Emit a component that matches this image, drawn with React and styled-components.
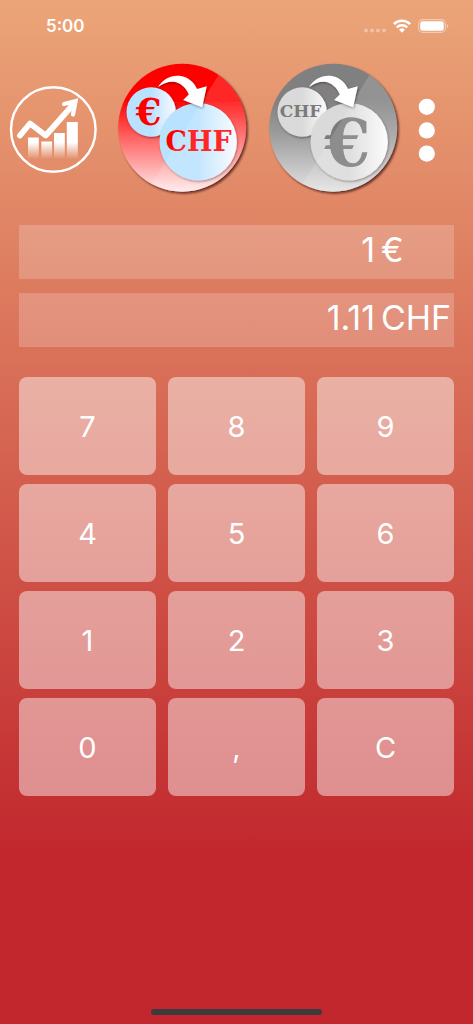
import React, {useState} from 'react'
import styled, {createGlobalStyle} from 'styled-components'

const RATE = 1.11
const KEYS = ['7', '8', '9', '4', '5', '6', '1', '2', '3', '0', ',', 'C']

const GlobalStyle = createGlobalStyle`
    body {
        margin: 0;
        background: #c1272d;
    }

    * {
        box-sizing: border-box;
    }
`

const Page = styled.div`
    display: flex;
    flex-direction: column;
    min-height: 100vh;
    font-family: Inter, "Liberation Sans", sans-serif;
    color: #ffffff;
    background: linear-gradient(#eba578 0%, #c1272d 84%);
`

const StatusBar = styled.div`
    display: flex;
    align-items: center;
    justify-content: space-between;
    height: 52px;
    padding: 0 24px 0 46px;
`

const Clock = styled.time`
    font-size: 17px;
    font-weight: 600;
    line-height: 24px;
`

const StatusIcons = styled.div`
    display: flex;
    align-items: center;
    gap: 7px;
`

const Toolbar = styled.nav`
    display: flex;
    align-items: center;
    justify-content: space-between;
    padding: 12px 37px 31px 9px;
`

const IconButton = styled.button`
    flex: none;
    padding: 0;
    border: none;
    border-radius: ${p => (p.$round ? '50%' : '0')};
    background: none;
    cursor: pointer;

    & svg {
        display: block;
        overflow: visible;
    }
`

const Displays = styled.section`
    display: grid;
    gap: 14px;
    padding: 0 19px;
`

const Display = styled.output`
    display: grid;
    grid-template-columns: 1fr 73px;
    column-gap: 6px;
    height: 54px;
    font-size: 34px;
    font-weight: 400;
    line-height: 49px;
    background: rgba(255, 255, 255, 0.2);
`

const Amount = styled.span`
    overflow: hidden;
    text-align: right;
`

const Keypad = styled.div`
    display: grid;
    grid-template-columns: repeat(3, 1fr);
    grid-auto-rows: 98px;
    gap: 9px 12px;
    padding: 30px 19px;
`

const Key = styled.button`
    padding: 0;
    border: none;
    border-radius: 8px;
    font-family: inherit;
    font-size: 29px;
    font-weight: 400;
    color: #ffffff;
    background: rgba(255, 255, 255, 0.46);
    cursor: pointer;

    &:active {
        background: rgba(255, 255, 255, 0.6);
    }
`

const HomeBar = styled.div`
    width: 36%;
    height: 6px;
    margin: auto auto 9px;
    border-radius: 3px;
    background: #3d3a3c;
`

const SignalIcon = () => (
    <svg width="22" height="14" viewBox="0 0 22 14" fill="#fff" fillOpacity="0.35">
        {[2, 8, 14, 20].map(x => <circle key={x} cx={x} cy="11.5" r="2" />)}
    </svg>
)

const WifiIcon = () => (
    <svg width="18" height="14" viewBox="0 0 18 14" fill="none" stroke="#fff" strokeWidth="2.5">
        <path d="M.9 5.2a11.5 11.5 0 0 1 16.2 0" />
        <path d="M3.8 8.4a7.4 7.4 0 0 1 10.4 0" />
        <path d="M9 13.7l-2.9-2.9a4.1 4.1 0 0 1 5.8 0z" fill="#fff" stroke="none" />
    </svg>
)

const BatteryIcon = () => (
    <svg width="31" height="14" viewBox="0 0 31 14">
        <rect x="0.6" y="0.6" width="26.8" height="12.8" rx="4" fill="none" stroke="#fff" strokeOpacity="0.45" strokeWidth="1.1" />
        <rect x="2.2" y="2.2" width="23.6" height="9.6" rx="2.5" fill="#fff" />
        <path d="M28.8 4.9c1.8.6 1.8 3.6 0 4.2z" fill="#fff" fillOpacity="0.5" />
    </svg>
)

const ChartIcon = () => (
    <svg width="88" height="88" viewBox="0 0 88 88">
        <defs>
            <linearGradient id="bars" gradientUnits="userSpaceOnUse" x1="0" y1="52" x2="0" y2="74">
                <stop offset="0.25" stopColor="#fff" />
                <stop offset="1" stopColor="#fff" stopOpacity="0" />
            </linearGradient>
        </defs>
        <circle cx="44.3" cy="44.5" r="42.3" fill="none" stroke="#fff" strokeWidth="2.4" />
        <g fill="url(#bars)">
            <rect x="19" y="52.5" width="10.8" height="21.5" />
            <rect x="32.3" y="56.5" width="10.8" height="17.5" />
            <rect x="45" y="48" width="10.8" height="26" />
            <rect x="57.8" y="37" width="11" height="37" />
        </g>
        <g fill="none" stroke="#fff" strokeLinecap="round" strokeLinejoin="round">
            <path d="M11 50.5L21 38.5L36.7 50.5L62 22" strokeWidth="5.8" />
            <path d="M55 19L66.6 16L64 29.5" strokeWidth="4.2" strokeLinejoin="miter" />
            <path d="M60 20L65.5 18L64 24z" fill="#fff" strokeWidth="2" />
        </g>
    </svg>
)

const DISC_COLORS = {
    red: {top: '#ff0000', middle: '#ff5a5a', bottom: '#ffe9e9', coin: '#b8e2ff', text: '#ff0000'},
    grey: {top: '#808080', middle: '#9c9c9c', bottom: '#e2e2e2', coin: '#dadada', text: '#7a7a7a'},
}

const CoinText = styled.g`
    font-family: "DejaVu Serif", serif;
    font-weight: 700;
    text-anchor: middle;
`

const ConvertIcon = ({tone, children}) => {
    const c = DISC_COLORS[tone]
    return (
        <svg width="130" height="130" viewBox="-0.5 0 130 130">
            <defs>
                <linearGradient id={`${tone}-disc`} x1="0" y1="0" x2="0" y2="1">
                    <stop offset="0.28" stopColor={c.top} />
                    <stop offset="0.55" stopColor={c.middle} />
                    <stop offset="1" stopColor={c.bottom} />
                </linearGradient>
                <linearGradient id={`${tone}-coin`} x1="0" y1="0" x2="1" y2="0">
                    <stop offset="0.5" stopColor={c.coin} />
                    <stop offset="1" stopColor="#fbfbfd" />
                </linearGradient>
                <filter id={`${tone}-shadow`} x="-20%" y="-20%" width="150%" height="150%">
                    <feDropShadow dx="1.6" dy="1.8" stdDeviation="1.3" floodColor="#401008" floodOpacity="0.8" />
                </filter>
                <filter id={`${tone}-soft`} x="-20%" y="-20%" width="150%" height="150%">
                    <feDropShadow dx="0.8" dy="1.2" stdDeviation="1.2" floodColor="#301010" floodOpacity="0.45" />
                </filter>
                <clipPath id={`${tone}-clip`}>
                    <circle cx="64.7" cy="63.7" r="64" />
                </clipPath>
            </defs>
            <circle cx="64.7" cy="63.7" r="64" fill={`url(#${tone}-disc)`} filter={`url(#${tone}-shadow)`} />
            <g fill={`url(#${tone}-coin)`} filter={`url(#${tone}-soft)`}>
                <circle cx="33.7" cy="48" r="24.7" />
            </g>
            <CoinText fill={c.text}>{children[0]}</CoinText>
            <g fill={`url(#${tone}-coin)`} filter={`url(#${tone}-soft)`}>
                <circle cx="80.7" cy="77.7" r="38.7" />
            </g>
            <CoinText fill={c.text}>{children[1]}</CoinText>
            <path d="M104 6L28 130H140V6z" fill="#fff" fillOpacity="0.15" clipPath={`url(#${tone}-clip)`} />
            <path
                d="M40.3 23.3C45.5 14.5 55 10.2 64.5 12.2C71.8 13.9 77 18.7 79.5 25L89.3 22.2L84.6 43.3L65.6 36L71.3 30.4C68.5 23.5 62.5 18 55.5 17.7C50 17.6 45 19.6 40.3 23.3z"
                fill="#fff"
                filter={`url(#${tone}-soft)`}
            />
        </svg>
    )
}

const MoreIcon = () => (
    <svg width="18" height="64" viewBox="0 0 18 64" fill="#fff">
        <circle cx="8.8" cy="9.8" r="8.1" />
        <circle cx="8.8" cy="33.4" r="8.1" />
        <circle cx="8.8" cy="56.6" r="8.1" />
    </svg>
)

const App = () => {
    const [input, setInput] = useState('1')
    const [fromEuro, setFromEuro] = useState(true)

    const press = key => {
        if (key === 'C') return setInput('0')
        if (key === ',') return setInput(input.includes('.') ? input : input + '.')
        setInput(input === '0' ? key : input + key)
    }

    const amount = Number(input)
    const result = (fromEuro ? amount * RATE : amount / RATE).toFixed(2)

    return (
        <Page>
            <GlobalStyle />
            <StatusBar>
                <Clock>5:00</Clock>
                <StatusIcons>
                    <SignalIcon />
                    <WifiIcon />
                    <BatteryIcon />
                </StatusIcons>
            </StatusBar>
            <Toolbar>
                <IconButton $round aria-label="Chart">
                    <ChartIcon />
                </IconButton>
                <IconButton $round aria-label="Euro to franc" onClick={() => setFromEuro(true)}>
                    <ConvertIcon tone="red">
                        <text x="31" y="61" fontSize="37">€</text>
                        <text x="81" y="87" fontSize="27">CHF</text>
                    </ConvertIcon>
                </IconButton>
                <IconButton $round aria-label="Franc to euro" onClick={() => setFromEuro(false)}>
                    <ConvertIcon tone="grey">
                        <text x="32" y="53" fontSize="17">CHF</text>
                        <text x="79" y="102" fontSize="66">€</text>
                    </ConvertIcon>
                </IconButton>
                <IconButton aria-label="Menu">
                    <MoreIcon />
                </IconButton>
            </Toolbar>
            <Displays>
                <Display>
                    <Amount>{input}</Amount>
                    <span>{fromEuro ? '€' : 'CHF'}</span>
                </Display>
                <Display>
                    <Amount>{result}</Amount>
                    <span>{fromEuro ? 'CHF' : '€'}</span>
                </Display>
            </Displays>
            <Keypad>
                {KEYS.map(key => (
                    <Key key={key} onClick={() => press(key)}>{key}</Key>
                ))}
            </Keypad>
            <HomeBar />
        </Page>
    )
}

export default App
